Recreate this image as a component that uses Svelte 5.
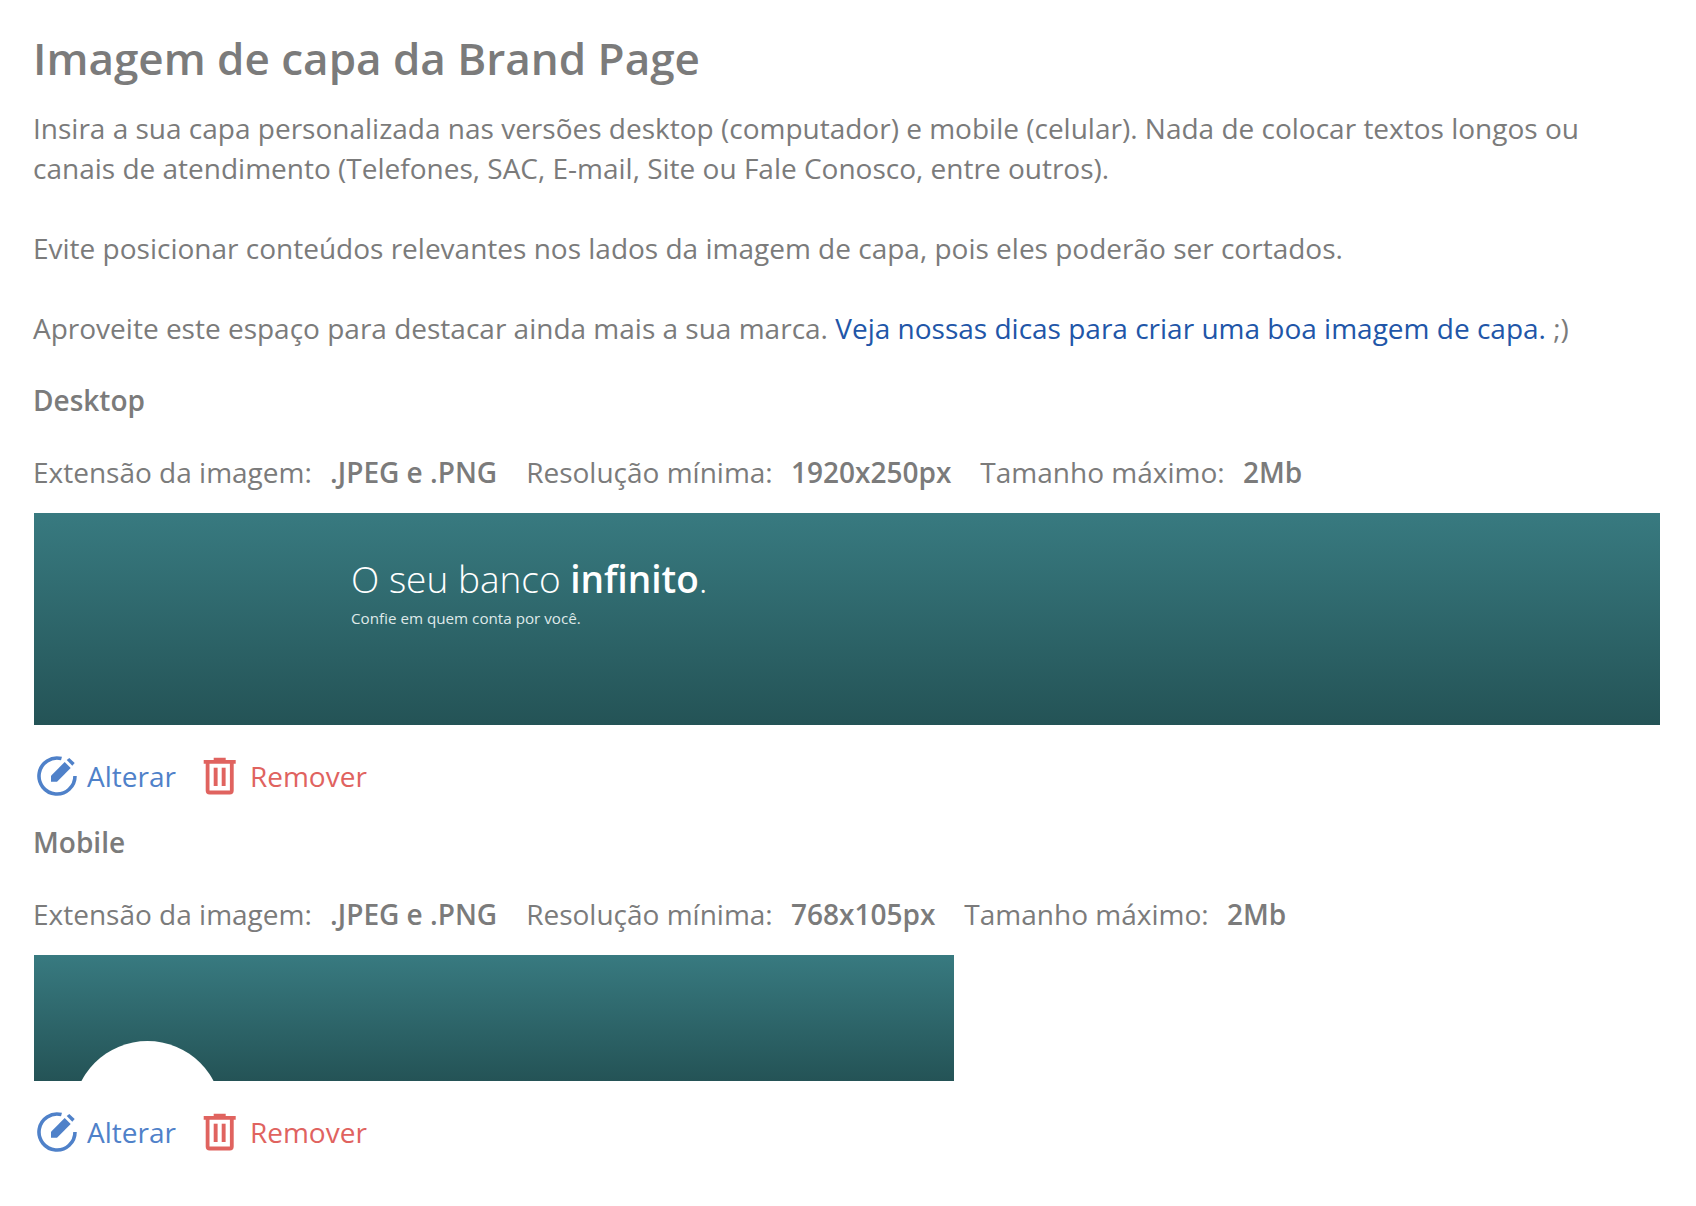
<script>
  const sections = [
    { title: "Desktop", res: "1920x250px", banner: "desktop" },
    { title: "Mobile", res: "768x105px", banner: "mobile" }
  ]
</script>

<div class="page">
  <h1>Imagem de capa da Brand Page</h1>
  <p>Insira a sua capa personalizada nas versões desktop (computador) e mobile (celular). Nada de colocar textos longos ou canais de atendimento (Telefones, SAC, E-mail, Site ou Fale Conosco, entre outros).</p>
  <p>Evite posicionar conteúdos relevantes nos lados da imagem de capa, pois eles poderão ser cortados.</p>
  <p class="last">Aproveite este espaço para destacar ainda mais a sua marca. <a href="#dicas">Veja nossas dicas para criar uma boa imagem de capa.</a> ;)</p>

  {#each sections as s}
    <h2>{s.title}</h2>
    <div class="specs">
      <span>Extensão da imagem: <b>.JPEG e .PNG</b></span>
      <span>Resolução mínima: <b>{s.res}</b></span>
      <span>Tamanho máximo: <b>2Mb</b></span>
    </div>

    {#if s.banner === "desktop"}
      <div class="banner desktop">
        <div class="headline">O seu banco <b>infinito</b>.</div>
        <div class="sub">Confie em quem conta por você.</div>
      </div>
    {:else}
      <div class="banner mobile">
        <div class="avatar"></div>
      </div>
    {/if}

    <div class="actions">
      <button class="edit">
        <svg width="42" height="42" viewBox="0 0 42 42" fill="none">
          <path d="M25.500 3.600A18 18 0 1 0 39 21" stroke="currentColor" stroke-width="3.600"/>
          <path d="M15 20.700 28.700 7 34.700 13 21 26.700H15Z" fill="currentColor"/>
          <path d="M30.700 5 33.300 3 38.700 8 36.300 10.700Z" fill="currentColor"/>
        </svg>
        Alterar
      </button>
      <button class="remove">
        <svg width="33" height="38" viewBox="0 0 33 38" fill="none">
          <path d="M10.700 .7H22.700V3H32.700V6.700H.7V3H10.700Z" fill="currentColor"/>
          <path d="M4.600 6V33.500A2 2 0 0 0 6.600 35.500H26.800A2 2 0 0 0 28.800 33.500V6" stroke="currentColor" stroke-width="3.800"/>
          <rect x="10.700" y="10.700" width="3.900" height="18.300" fill="currentColor"/>
          <rect x="18.700" y="10.700" width="3.900" height="18.300" fill="currentColor"/>
        </svg>
        Remover
      </button>
    </div>
  {/each}
</div>

<style>
  :global(body) {
    margin: 0;
    background: #fff;
  }
  .page {
    padding: 28px 34px 0 33px;
    font-family: "Open Sans", sans-serif;
    font-size: 28px;
    line-height: 40px;
    color: #7b7b7b;
  }
  h1 {
    margin: 0 0 20px;
    font-size: 44px;
    line-height: 60px;
    font-weight: 600;
  }
  p {
    margin: 0 0 40px;
  }
  p.last {
    margin-bottom: 32px;
  }
  a {
    color: #2156a8;
    text-decoration: none;
  }
  h2 {
    margin: 0 0 32px;
    font-size: 28px;
    line-height: 40px;
    font-weight: 600;
  }
  .specs {
    display: flex;
    gap: 29px;
    margin-bottom: 21px;
  }
  .specs b {
    margin-left: 11px;
    font-weight: 600;
  }
  .banner {
    background: linear-gradient(#387a80, #245356);
    position: relative;
    overflow: hidden;
    color: #fff;
    margin: 0 2px 0 1px;
  }
  .desktop {
    height: 212px;
    padding: 40px 0 0 317px;
    box-sizing: border-box;
  }
  .mobile {
    width: 920px;
    height: 126px;
  }
  .headline {
    font-size: 37px;
    line-height: 52px;
    font-weight: 300;
  }
  .headline b {
    font-weight: 600;
  }
  .sub {
    margin-top: 3px;
    font-size: 15.200px;
    line-height: 20px;
    color: #dfe9e9;
  }
  .avatar {
    position: absolute;
    left: 39px;
    top: 86px;
    width: 149px;
    height: 149px;
    border-radius: 50%;
    background: #fff;
  }
  .actions {
    display: flex;
    gap: 27px;
    margin: 29px 0 24px 3px;
  }
  button {
    display: flex;
    align-items: center;
    gap: 9px;
    padding: 0;
    border: 0;
    background: none;
    font: inherit;
    line-height: 44px;
  }
  .edit {
    color: #4f81c9;
  }
  .remove {
    color: #e0635f;
    gap: 14px;
  }
</style>
